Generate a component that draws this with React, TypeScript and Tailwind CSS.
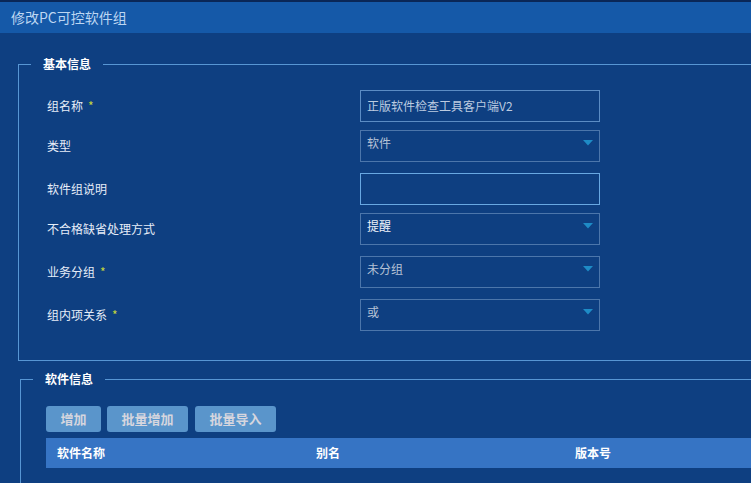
import React from 'react';

const font = { fontFamily: '"Noto Sans CJK SC", "Noto Sans", sans-serif' };

function Star() {
  return <span className="ml-[5px] text-[#c3d63a]">*</span>;
}

function Arrow() {
  return (
    <svg width="10" height="6" viewBox="0 0 10 6" className="absolute right-[6px] top-[9px]">
      <path d="M0 0 L10 0 L5 5.5 Z" fill="#1e8bc6" />
    </svg>
  );
}

function TextBox({ value, bright }: { value?: string; bright?: boolean }) {
  return (
    <div
      className={`w-[240px] h-[32px] border flex items-center px-[6px] text-[12px] text-[#bccbe0] ${
        bright ? 'border-[#68a8e2]' : 'border-[#5b8cc4]'
      }`}
    >
      {value}
    </div>
  );
}

function SelectBox({ value, active }: { value: string; active?: boolean }) {
  return (
    <div className="relative w-[240px] h-[32px] border border-[#4c76ab] px-[6px] pt-[2px] text-[12px] leading-[20px]">
      <span className={active ? 'text-[#eef3fb]' : 'text-[#b6c2d6]'}>{value}</span>
      <Arrow />
    </div>
  );
}

function Row({ label, required, children, top }: { label: string; required?: boolean; children: React.ReactNode; top: string }) {
  return (
    <div className={`flex items-center h-[32px] ${top}`}>
      <div className="w-[313px] text-[12px] text-[#e6edf8]">
        {label}
        {required && <Star />}
      </div>
      {children}
    </div>
  );
}

export default function App() {
  return (
    <div className="w-[751px] h-[483px] overflow-hidden bg-[#0e3f81]" style={font}>
      <div className="h-[2px] bg-[#0a2757]" />
      <div className="h-[31px] bg-[#1559a8] flex items-center px-[11px] text-[14px] text-[#bcd6f2]">
        修改PC可控软件组
      </div>

      <fieldset className="ml-[18px] mt-[22px] w-[760px] border border-[#5796d4]">
        <legend className="ml-[12px] px-[12px] text-[12px] leading-[18px] font-bold text-white">基本信息</legend>
        <div className="pl-[28px] pt-[17px] pb-[29px]">
          <Row label="组名称" required top="">
            <TextBox value="正版软件检查工具客户端V2" />
          </Row>
          <Row label="类型" top="mt-[8px]">
            <SelectBox value="软件" />
          </Row>
          <Row label="软件组说明" top="mt-[11px]">
            <TextBox bright />
          </Row>
          <Row label="不合格缺省处理方式" top="mt-[8px]">
            <SelectBox value="提醒" active />
          </Row>
          <Row label="业务分组" required top="mt-[11px]">
            <SelectBox value="未分组" />
          </Row>
          <Row label="组内项关系" required top="mt-[11px]">
            <SelectBox value="或" />
          </Row>
        </div>
      </fieldset>

      <fieldset className="ml-[20px] mt-[9px] w-[760px] border border-[#5796d4]">
        <legend className="ml-[12px] px-[12px] text-[12px] leading-[18px] font-bold text-white">软件信息</legend>
        <div className="pl-[25px] pt-[18px]">
          <div className="flex gap-[6px]">
            <button className="w-[55px] h-[26px] rounded-[3px] bg-[#5a95cb] text-[13px] font-bold text-[#d6d6de]">增加</button>
            <button className="w-[81px] h-[26px] rounded-[3px] bg-[#5a95cb] text-[13px] font-bold text-[#d6d6de]">批量增加</button>
            <button className="ml-[1px] w-[81px] h-[26px] rounded-[3px] bg-[#5a95cb] text-[13px] font-bold text-[#d6d6de]">批量导入</button>
          </div>
          <div className="mt-[6px]">
            <div className="flex h-[30px] items-center bg-[#3674c4] text-[12px] font-bold text-white">
              <div className="w-[259px] pl-[11px]">软件名称</div>
              <div className="w-[259px] pl-[11px]">别名</div>
              <div className="pl-[11px]">版本号</div>
            </div>
            <div className="flex h-[30px] items-center text-[12px] text-[#c9d4e6]">
              <div className="w-[259px] pl-[9px] pt-[20px]">正版软件检查工具客户端</div>
            </div>
          </div>
        </div>
      </fieldset>
    </div>
  );
}
